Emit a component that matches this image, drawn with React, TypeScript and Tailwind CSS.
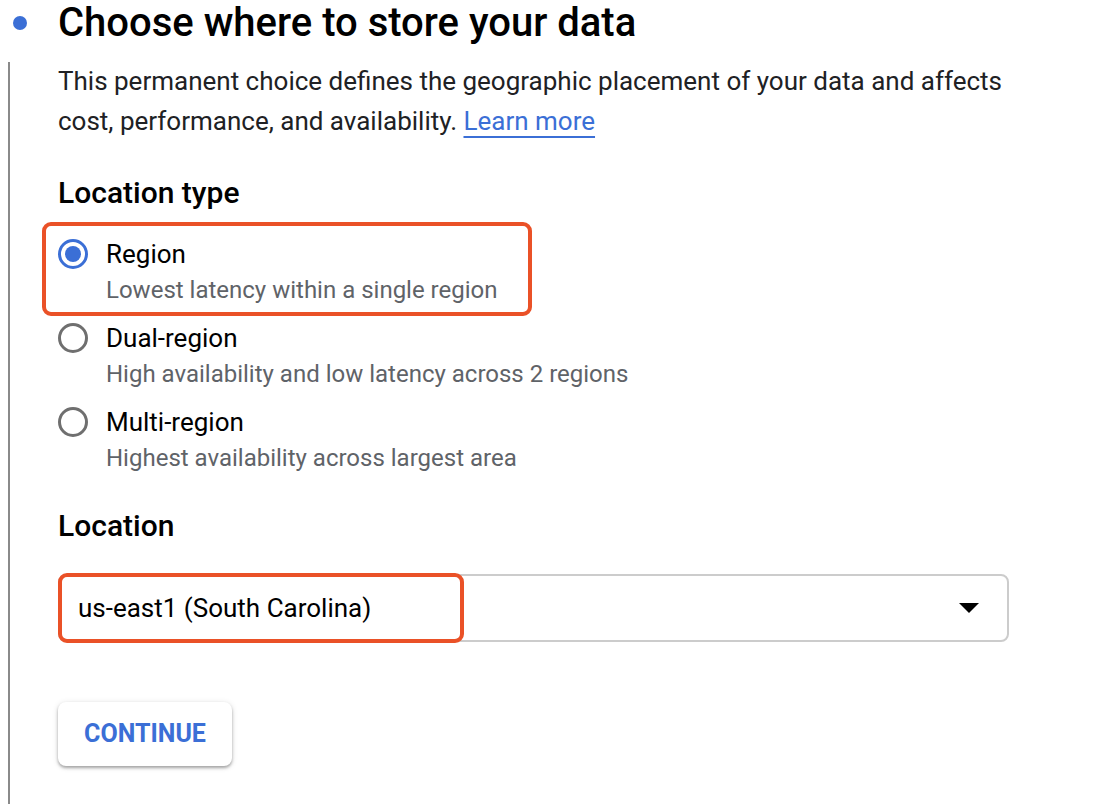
import React from "react";

const options = [
  { label: "Region", sub: "Lowest latency within a single region", checked: true },
  { label: "Dual-region", sub: "High availability and low latency across 2 regions", checked: false },
  { label: "Multi-region", sub: "Highest availability across largest area", checked: false },
];

function Radio({ checked }: { checked: boolean }) {
  return (
    <div
      className={`w-[30px] h-[30px] rounded-full border-[3px] flex items-center justify-center shrink-0 ${
        checked ? "border-[#3b6fd6]" : "border-[#6f6f6f]"
      }`}
    >
      {checked && <div className="w-[16px] h-[16px] rounded-full bg-[#3b6fd6]" />}
    </div>
  );
}

export default function App() {
  return (
    <div
      className="w-[1096px] h-[804px] bg-white flex overflow-hidden text-[#202124]"
      style={{ fontFamily: "Roboto, 'Liberation Sans', sans-serif" }}
    >
      {/* Stepper rail */}
      <div className="w-[58px] shrink-0 flex flex-col">
        <div className="w-[14px] h-[14px] rounded-full bg-[#3b6fd6] ml-[13px] mt-[16px]" />
        <div className="w-[2px] flex-1 bg-[#8a8a8a] ml-[8px] mt-[32px]" />
      </div>

      {/* Content */}
      <div className="flex-1 flex flex-col pt-[2px]">
        <h1 className="text-[40px] leading-[42px] font-medium text-black">
          Choose where to store your data
        </h1>
        <p className="text-[26px] leading-[40px] text-[#202124] mt-[17px] whitespace-nowrap">
          This permanent choice defines the geographic placement of your data and affects
          <br />
          cost, performance, and availability.{" "}
          <a className="text-[#3b6fd6] underline underline-offset-[6px] decoration-[2px]">Learn more</a>
        </p>

        <h2 className="text-[30px] leading-[36px] font-medium text-black mt-[34px]">Location type</h2>

        <div className="flex flex-col mt-[27px]">
          {options.map((o) => (
            <div key={o.label} className="relative flex gap-[18px] h-[84px]">
              {o.checked && (
                <div className="absolute left-[-16px] top-[-16px] w-[490px] h-[94px] border-[4px] border-[#ea5127] rounded-[9px]" />
              )}
              <div className="pt-[1px]">
                <Radio checked={o.checked} />
              </div>
              <div className="flex flex-col">
                <span className="text-[26px] leading-[32px] text-black">{o.label}</span>
                <span className="text-[24px] leading-[30px] text-[#5f6368] mt-[5px]">{o.sub}</span>
              </div>
            </div>
          ))}
        </div>

        <h2 className="text-[30px] leading-[36px] font-medium text-black mt-[18px]">Location</h2>

        <div className="relative mt-[30px] w-[951px] h-[68px] border-2 border-[#cccccc] rounded-[8px] flex items-center justify-between pl-[18px] pr-[28px]">
          <div className="absolute left-[-2px] top-[-3px] w-[406px] h-[70px] border-[4px] border-[#ea5127] rounded-[9px]" />
          <span className="text-[26px] text-black">us-east1 (South Carolina)</span>
          <svg width="20" height="11" viewBox="0 0 20 11">
            <path d="M0 0 L20 0 L10 10 Z" fill="#000" />
          </svg>
        </div>

        <button className="mt-[60px] w-[174px] h-[64px] rounded-[8px] bg-white shadow-[0_2px_3px_rgba(0,0,0,0.3),0_1px_6px_rgba(0,0,0,0.12)] text-[25px] font-bold text-[#3b6fd6]">
          CONTINUE
        </button>
      </div>
    </div>
  );
}
